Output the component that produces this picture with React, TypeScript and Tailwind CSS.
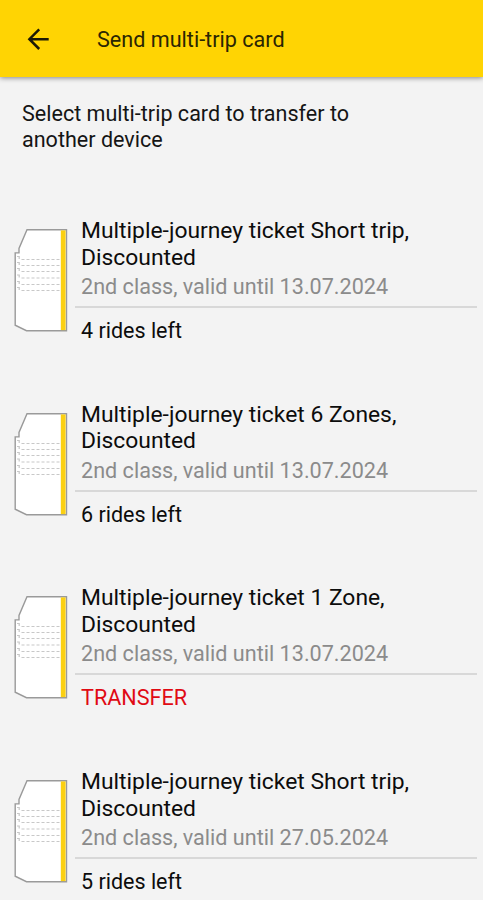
import React from 'react';

interface Ticket {
  id: number;
  title: string;
  validity: string;
  status: string;
  transferable?: boolean;
}

const tickets: Ticket[] = [
  {
    id: 1,
    title: 'Multiple-journey ticket Short trip,',
    validity: '2nd class, valid until 13.07.2024',
    status: '4 rides left',
  },
  {
    id: 2,
    title: 'Multiple-journey ticket 6 Zones,',
    validity: '2nd class, valid until 13.07.2024',
    status: '6 rides left',
  },
  {
    id: 3,
    title: 'Multiple-journey ticket 1 Zone,',
    validity: '2nd class, valid until 13.07.2024',
    status: 'TRANSFER',
    transferable: true,
  },
  {
    id: 4,
    title: 'Multiple-journey ticket Short trip,',
    validity: '2nd class, valid until 27.05.2024',
    status: '5 rides left',
  },
];

// Stamp lines on the card, top to bottom
const stampLines = [31.5, 37.5, 43.5, 50, 56.5, 62.5];

const BackArrow: React.FC = () => (
  <svg className="size-7" viewBox="0 0 28 28" fill="none" stroke="#1c1a05" strokeWidth="2.5">
    <path d="M24.7 13.2H5.4M15.2 3.4L5.4 13.2l9.8 9.8" />
  </svg>
);

const CardIcon: React.FC = () => (
  <svg className="h-[104px] w-[56px] shrink-0" viewBox="0 0 56 104" fill="none">
    <path
      d="M14 1.8H53.5V102.7H13.5L2.2 97.2V24.9H6V20.5Z"
      fill="#fff"
      stroke="#9a9a9a"
      strokeWidth="1.4"
    />
    <path d="M47.8 2.4H52.6V102.1H47.8Z" fill="#fbd012" />
    {stampLines.map((y) => (
      <g key={y} stroke="#c8c8c8" strokeWidth="1.2">
        <path d={`M8.5 ${y}H48`} strokeDasharray="3 2" />
        <path d={`M4 ${y - 3}h2.2v2.4`} />
      </g>
    ))}
  </svg>
);

const TicketRow: React.FC<{ ticket: Ticket }> = ({ ticket }) => (
  <li className="flex h-[183.6px] items-start pl-[13px] pr-[6px]">
    <div className="mt-[10px]">
      <CardIcon />
    </div>
    <div className="ml-[6px] flex-1">
      <div className="border-b-2 border-[#d8d8d8] pb-[6px] pl-[6px]">
        <h2 className="text-[22.85px] leading-[26.5px] text-[#0c0c0c]">
          {ticket.title}
          <br />
          Discounted
        </h2>
        <p className="mt-[3px] text-[21.6px] leading-[26px] text-[#8b8b8b]">
          {ticket.validity}
        </p>
      </div>
      <p
        className={
          ticket.transferable
            ? 'mt-[10px] pl-[6px] text-[21.6px] leading-[26px] text-[#e00a14]'
            : 'mt-[10px] pl-[6px] text-[21.5px] leading-[26px] text-[#0c0c0c]'
        }
      >
        {ticket.status}
      </p>
    </div>
  </li>
);

const App: React.FC = () => {
  return (
    <div className="h-[900px] w-[483px] overflow-hidden bg-[#f3f3f3] font-['Roboto',sans-serif]">
      <header className="flex h-[77px] items-center bg-[#ffd403] pl-6 pt-[2px] shadow-[0_1px_5px_rgba(0,0,0,0.45)]">
        <BackArrow />
        <h1 className="ml-[45px] text-[21.6px] leading-7 text-[#2b2603]">Send multi-trip card</h1>
      </header>

      <p className="ml-[22px] mt-[24px] h-[117.3px] w-[340px] text-[21.55px] leading-[25.5px] text-[#151515]">
        Select multi-trip card to transfer to another device
      </p>

      <ul>
        {tickets.map((ticket) => (
          <TicketRow key={ticket.id} ticket={ticket} />
        ))}
      </ul>
    </div>
  );
};

export default App;
